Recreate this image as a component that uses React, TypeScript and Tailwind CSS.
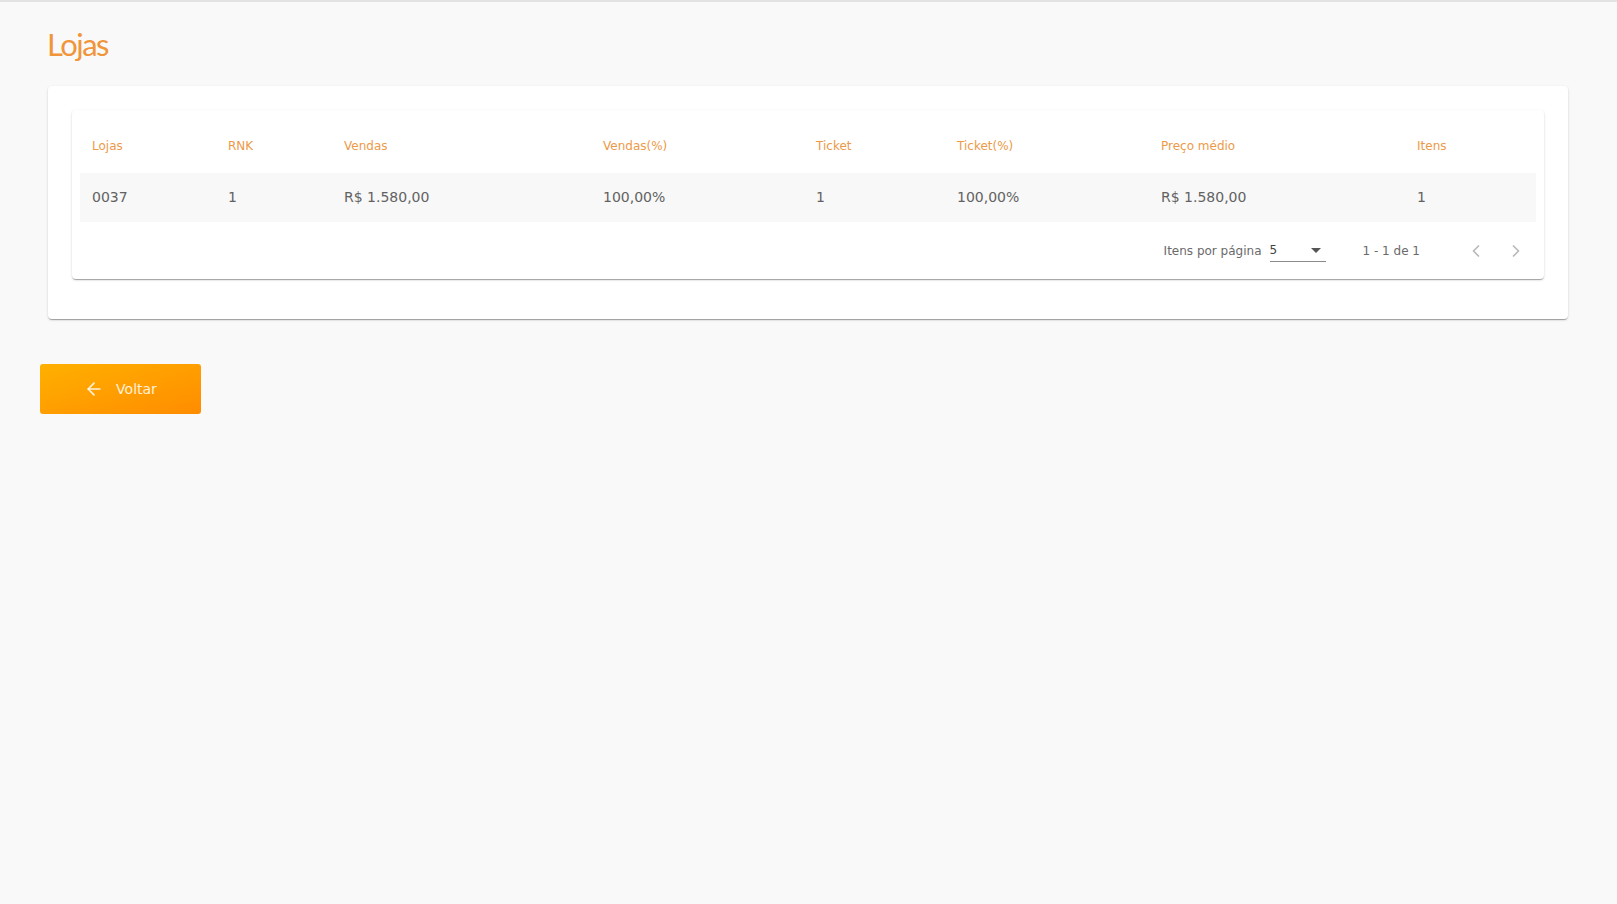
import { ArrowLeft } from "lucide-react";

// Tabela de lojas com ranking de vendas e paginação simples
const colunas = [
  "Lojas",
  "RNK",
  "Vendas",
  "Vendas(%)",
  "Ticket",
  "Ticket(%)",
  "Preço médio",
  "Itens",
];

const linhas = [
  ["0037", "1", "R$ 1.580,00", "100,00%", "1", "100,00%", "R$ 1.580,00", "1"],
];

const grade =
  "grid grid-cols-[136px_116px_259px_213px_141px_204px_256px_1fr] pl-3";

function Chevron({ dir }: { dir: "left" | "right" }) {
  return (
    <svg width="20" height="20" viewBox="0 0 24 24" fill="none">
      <polyline
        points={dir === "left" ? "15,6 9,12 15,18" : "9,6 15,12 9,18"}
        stroke="#b8b8b8"
        strokeWidth="2"
        strokeLinecap="round"
        strokeLinejoin="round"
      />
    </svg>
  );
}

export default function App() {
  return (
    <div className="min-h-[904px] bg-[#f9f9f9] font-['DejaVu_Sans',sans-serif]">
      <div className="h-[2px] bg-[#e3e3e3]" />

      <h1 className="ml-[47px] pt-[24px] font-['Lato',sans-serif] text-[31px] leading-[36px] tracking-[-0.05em] text-[#f0953a]">
        Lojas
      </h1>

      <div className="ml-[48px] mt-[24px] w-[1520px] rounded bg-white px-6 pb-10 pt-6 shadow-[0_2px_1px_-1px_rgba(0,0,0,0.2),0_1px_1px_0_rgba(0,0,0,0.14),0_1px_3px_0_rgba(0,0,0,0.12)]">
        <div className="rounded-sm bg-white px-2 shadow-[0_2px_1px_-1px_rgba(0,0,0,0.2),0_1px_1px_0_rgba(0,0,0,0.14),0_1px_3px_0_rgba(0,0,0,0.12)]">
          <div className={`${grade} h-[63px] items-center pt-2 text-[12px] text-[#ec9a48]`}>
            {colunas.map((c) => (
              <div key={c}>{c}</div>
            ))}
          </div>

          {linhas.map((linha, i) => (
            <div
              key={i}
              className={`${grade} h-[49px] items-center bg-[#f8f8f8] text-[14px] text-[#626262]`}
            >
              {linha.map((v, j) => (
                <div key={j}>{v}</div>
              ))}
            </div>
          ))}

          <div className="flex h-[57px] items-center justify-end text-[12px] text-[#6a6a6a]">
            <span>Itens por página</span>
            <div className="ml-2 flex h-[22px] w-[56px] items-center justify-between border-b border-[#8a8a8a] pr-[5px] text-[#444]">
              <span>5</span>
              <span className="h-0 w-0 border-x-[5px] border-t-[5px] border-x-transparent border-t-[#555]" />
            </div>
            <span className="ml-[37px]">1 - 1 de 1</span>
            <button type="button" className="ml-[36px] flex h-10 w-10 items-center justify-center">
              <Chevron dir="left" />
            </button>
            <button type="button" className="flex h-10 w-10 items-center justify-center">
              <Chevron dir="right" />
            </button>
          </div>
        </div>
      </div>

      <button
        type="button"
        className="ml-[40px] mt-[45px] flex h-[50px] w-[161px] items-center justify-center gap-[12px] rounded-[3px] bg-gradient-to-br from-[#ffb000] to-[#ff8c00] text-[14px] text-white/85"
      >
        <ArrowLeft size={20} strokeWidth={2} />
        <span>Voltar</span>
      </button>
    </div>
  );
}
